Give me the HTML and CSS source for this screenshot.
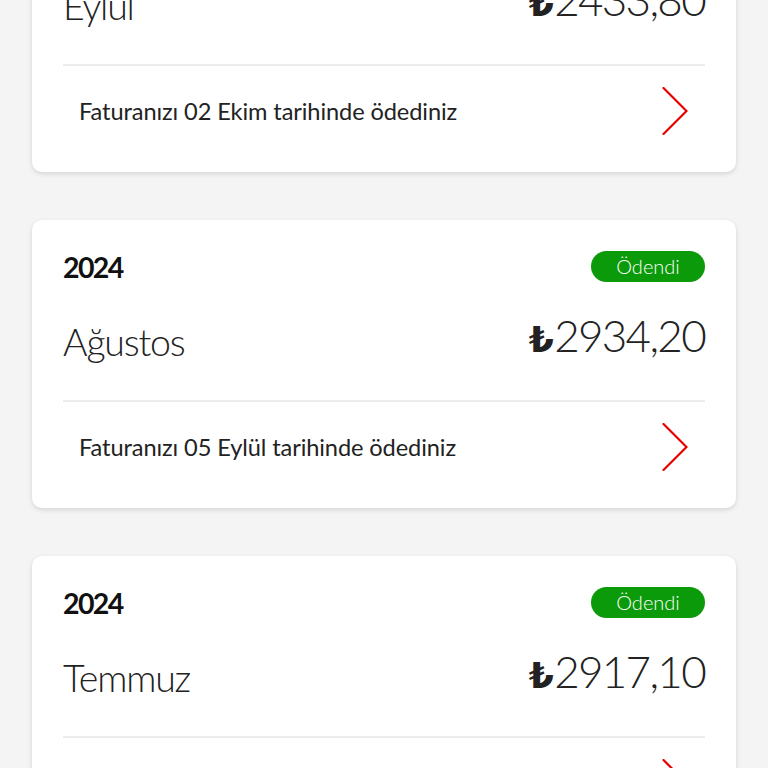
FILE: index.html
```html
<!DOCTYPE html>
<html lang="tr">
<head>
<meta charset="utf-8">
<title>Faturalar</title>
<link rel="stylesheet" href="styles.css">
</head>
<body>
<div class="list">
  <div class="card first">
    <div class="head">
      <span class="year">2024</span>
      <span class="badge">Ödendi</span>
    </div>
    <div class="main">
      <span class="month">Eylül</span>
      <span class="amount"><span class="lira">₺</span>2433,80</span>
    </div>
    <div class="divider"></div>
    <div class="foot">
      <span class="note">Faturanızı 02 Ekim tarihinde ödediniz</span>
      <svg class="chev" width="26" height="48" viewBox="0 0 26 48"><path d="M1.5 1 L24.5 24 L1.5 47" fill="none" stroke="#e60000" stroke-width="2.2" stroke-linecap="round" stroke-linejoin="miter"/></svg>
    </div>
  </div>
  <div class="card">
    <div class="head">
      <span class="year">2024</span>
      <span class="badge">Ödendi</span>
    </div>
    <div class="main">
      <span class="month">Ağustos</span>
      <span class="amount"><span class="lira">₺</span>2934,20</span>
    </div>
    <div class="divider"></div>
    <div class="foot">
      <span class="note">Faturanızı 05 Eylül tarihinde ödediniz</span>
      <svg class="chev" width="26" height="48" viewBox="0 0 26 48"><path d="M1.5 1 L24.5 24 L1.5 47" fill="none" stroke="#e60000" stroke-width="2.2" stroke-linecap="round" stroke-linejoin="miter"/></svg>
    </div>
  </div>
  <div class="card">
    <div class="head">
      <span class="year">2024</span>
      <span class="badge">Ödendi</span>
    </div>
    <div class="main">
      <span class="month">Temmuz</span>
      <span class="amount"><span class="lira">₺</span>2917,10</span>
    </div>
    <div class="divider"></div>
    <div class="foot">
      <span class="note">Faturanızı 05 Ağustos tarihinde ödediniz</span>
      <svg class="chev" width="26" height="48" viewBox="0 0 26 48"><path d="M1.5 1 L24.5 24 L1.5 47" fill="none" stroke="#e60000" stroke-width="2.2" stroke-linecap="round" stroke-linejoin="miter"/></svg>
    </div>
  </div>
</div>
</body>
</html>
```

FILE: styles.css
```css
html, body {
  margin: 0;
  padding: 0;
  background: #f4f4f4;
  font-family: Lato, "Open Sans", "Liberation Sans", sans-serif;
  color: #1f1f1f;
  overflow: hidden;
}
.list {
  display: flex;
  flex-direction: column;
  gap: 48px;
  padding: 0 32px;
}
.card {
  background: #fff;
  border-radius: 10px;
  box-shadow: 0 2px 5px rgba(0, 0, 0, 0.13);
  height: 288px;
  padding: 0 31px;
  box-sizing: border-box;
  display: flex;
  flex-direction: column;
}
.card.first {
  margin-top: -116px;
}
.head {
  margin-top: 31px;
  height: 31px;
  display: flex;
  justify-content: space-between;
  align-items: center;
}
.year {
  font-weight: 700;
  font-size: 28.5px;
  letter-spacing: -1.6px;
  color: #111;
  line-height: 31px;
  padding-top: 2px;
}
.badge {
  width: 114px;
  height: 31px;
  border-radius: 16px;
  background: #0a9a0a;
  color: #fff;
  font-size: 20px;
  line-height: 30px;
  text-align: center;
  font-weight: 300;
}
.main {
  height: 118px;
  display: flex;
  justify-content: space-between;
  align-items: flex-start;
}
.month {
  font-weight: 300;
  font-size: 37.5px;
  line-height: 44px;
  margin-top: 38px;
  color: #222;
  letter-spacing: -1.2px;
}
.amount {
  font-weight: 300;
  font-size: 44px;
  line-height: 50px;
  margin-top: 28px;
  color: #222;
  letter-spacing: -1.7px;
}
.lira {
  font-family: "DejaVu Sans", sans-serif;
  font-weight: 700;
  font-size: 36px;
  margin-right: 2px;
}
.divider {
  height: 2px;
  background: #ececec;
}
.foot {
  flex: 1;
  display: flex;
  justify-content: space-between;
  align-items: flex-start;
  padding: 21px 17px 0 16px;
}
.note {
  font-size: 23.6px;
  line-height: 48px;
  color: #222;
  letter-spacing: -0.1px;
}
.chev {
  display: block;
}
```
